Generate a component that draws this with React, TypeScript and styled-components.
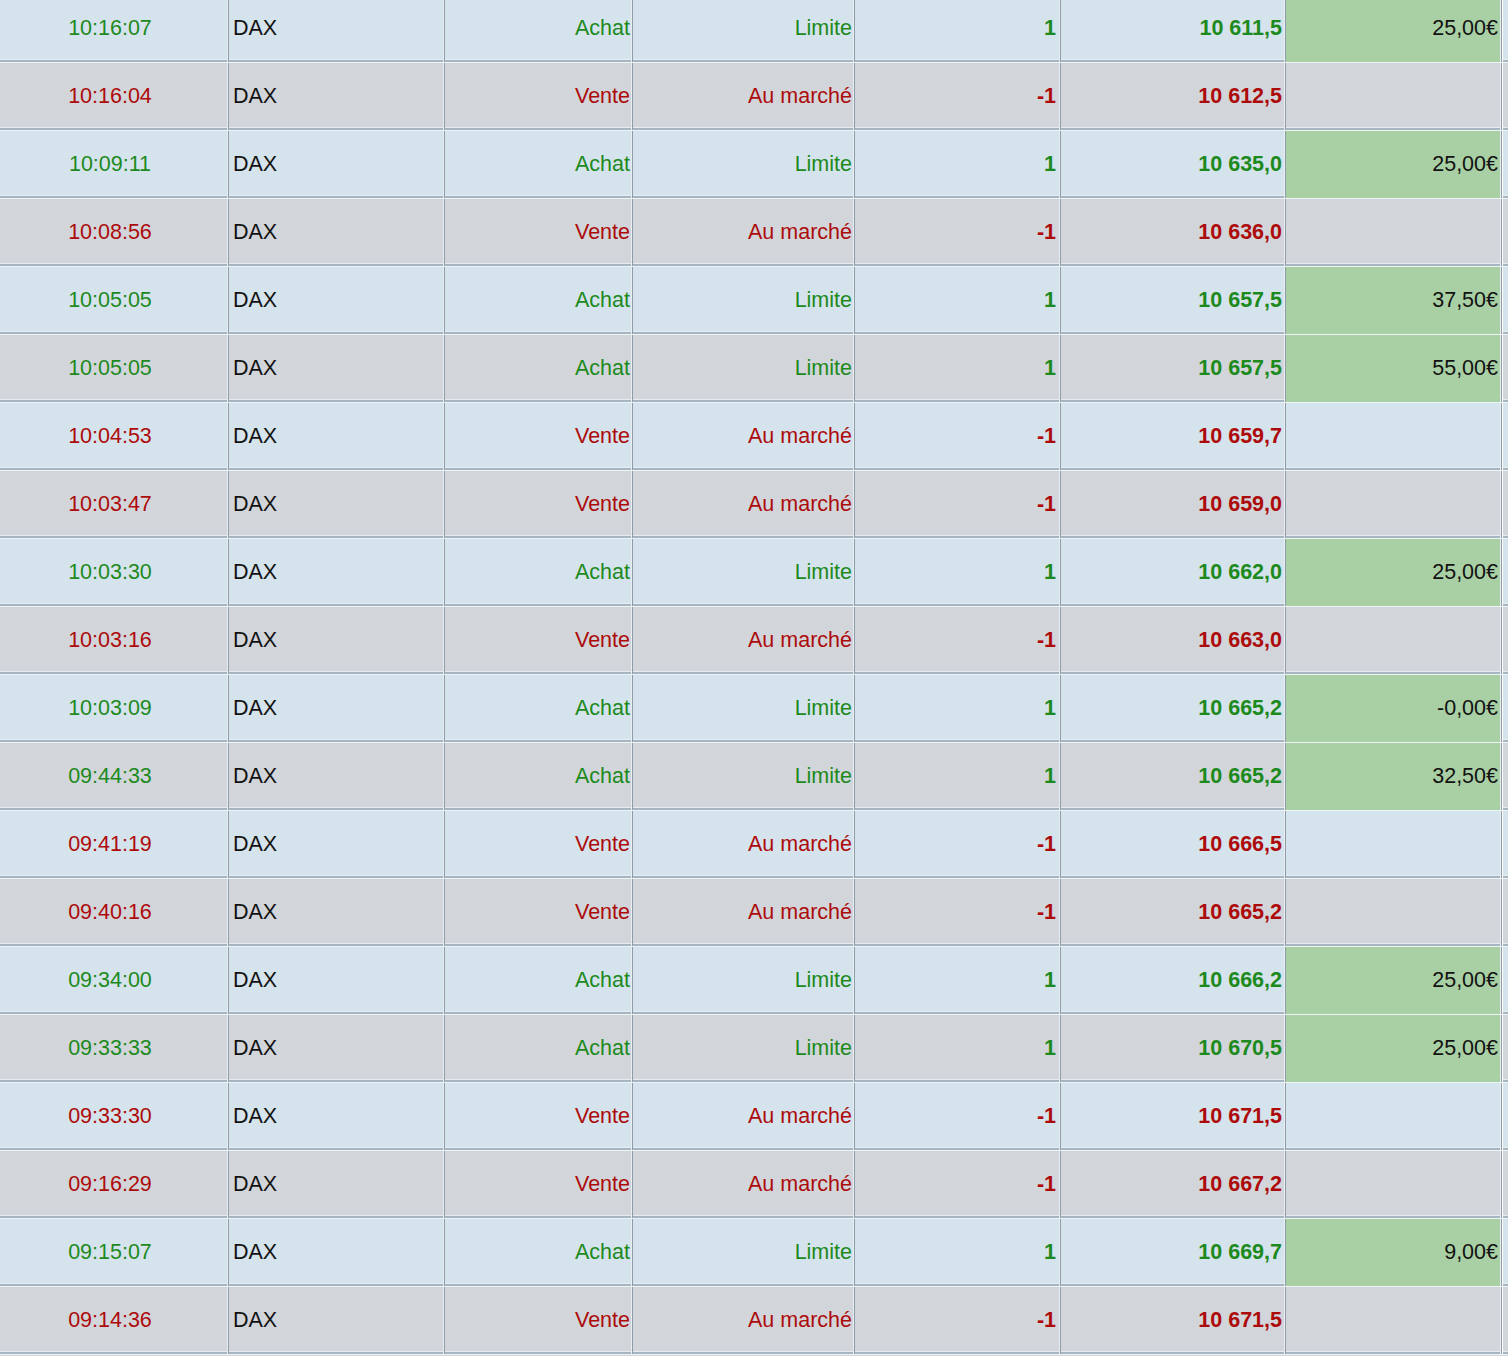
import styled, { createGlobalStyle } from 'styled-components';

type Side = 'buy' | 'sell';

type Fill = {
  time: string;
  side: Side;
  price: string;
  gain?: string;
};

const fills: Fill[] = [
  { time: '10:16:07', side: 'buy', price: '10 611,5', gain: '25,00€' },
  { time: '10:16:04', side: 'sell', price: '10 612,5' },
  { time: '10:09:11', side: 'buy', price: '10 635,0', gain: '25,00€' },
  { time: '10:08:56', side: 'sell', price: '10 636,0' },
  { time: '10:05:05', side: 'buy', price: '10 657,5', gain: '37,50€' },
  { time: '10:05:05', side: 'buy', price: '10 657,5', gain: '55,00€' },
  { time: '10:04:53', side: 'sell', price: '10 659,7' },
  { time: '10:03:47', side: 'sell', price: '10 659,0' },
  { time: '10:03:30', side: 'buy', price: '10 662,0', gain: '25,00€' },
  { time: '10:03:16', side: 'sell', price: '10 663,0' },
  { time: '10:03:09', side: 'buy', price: '10 665,2', gain: '-0,00€' },
  { time: '09:44:33', side: 'buy', price: '10 665,2', gain: '32,50€' },
  { time: '09:41:19', side: 'sell', price: '10 666,5' },
  { time: '09:40:16', side: 'sell', price: '10 665,2' },
  { time: '09:34:00', side: 'buy', price: '10 666,2', gain: '25,00€' },
  { time: '09:33:33', side: 'buy', price: '10 670,5', gain: '25,00€' },
  { time: '09:33:30', side: 'sell', price: '10 671,5' },
  { time: '09:16:29', side: 'sell', price: '10 667,2' },
  { time: '09:15:07', side: 'buy', price: '10 669,7', gain: '9,00€' },
  { time: '09:14:36', side: 'sell', price: '10 671,5' },
];

const GlobalStyle = createGlobalStyle`
  html, body {
    margin: 0;
    padding: 0;
    background: #d2d6da;
    overflow: hidden;
  }
  body {
    font-family: "Liberation Sans", Arial, Helvetica, sans-serif;
  }
`;

const Sheet = styled.div`
  margin-top: -5px;
  display: flex;
  flex-direction: column;
  width: 1508px;
`;

const Row = styled.div<{ $alt: boolean }>`
  display: grid;
  grid-template-columns: 229px 216px 188px 222px 206px 225px 216px 1fr;
  height: 68px;
  box-sizing: border-box;
  background: ${({ $alt }) => ($alt ? '#d2d6da' : '#d5e3ec')};
  border-bottom: 1px solid #eef3f6;
  box-shadow: inset 0 -2px 0 #a6b5c2, inset 0 -3px 0 #e6edf2;
`;

const Cell = styled.div<{
  $align?: 'left' | 'center' | 'right';
  $tone?: Side | 'plain';
  $bold?: boolean;
  $fill?: boolean;
  $padL?: number;
  $padR?: number;
}>`
  display: flex;
  align-items: center;
  justify-content: ${({ $align }) =>
    $align === 'left' ? 'flex-start' : $align === 'center' ? 'center' : 'flex-end'};
  padding: 0 ${({ $padR }) => $padR ?? 3}px 1px ${({ $padL }) => $padL ?? 0}px;
  box-sizing: border-box;
  font-size: 21.5px;
  font-weight: ${({ $bold }) => ($bold ? 700 : 400)};
  white-space: nowrap;
  color: ${({ $tone }) =>
    $tone === 'buy' ? '#1d8a1d' : $tone === 'sell' ? '#ad0b0b' : '#121212'};
  background: ${({ $fill }) => ($fill ? '#a9d0a4' : 'transparent')};
  border-right: 1px solid #8e9ca8;
  box-shadow: inset -1px 0 0 #e8eef2;
`;

const Tail = styled.div`
  border-left: 1px solid #ffffff;
`;

export default function App() {
  return (
    <>
      <GlobalStyle />
      <Sheet>
        {fills.map((f, i) => {
          const buy = f.side === 'buy';
          return (
            <Row key={i} $alt={i % 2 === 1}>
              <Cell $align="center" $tone={f.side} $padR={8}>{f.time}</Cell>
              <Cell $align="left" $tone="plain" $padL={4}>DAX</Cell>
              <Cell $tone={f.side} $padR={2}>{buy ? 'Achat' : 'Vente'}</Cell>
              <Cell $tone={f.side} $padR={2}>{buy ? 'Limite' : 'Au marché'}</Cell>
              <Cell $tone={f.side} $bold $padR={4}>{buy ? '1' : '-1'}</Cell>
              <Cell $tone={f.side} $bold>{f.price}</Cell>
              <Cell $tone="plain" $fill={!!f.gain}>{f.gain ?? ''}</Cell>
              <Tail />
            </Row>
          );
        })}
      </Sheet>
    </>
  );
}
